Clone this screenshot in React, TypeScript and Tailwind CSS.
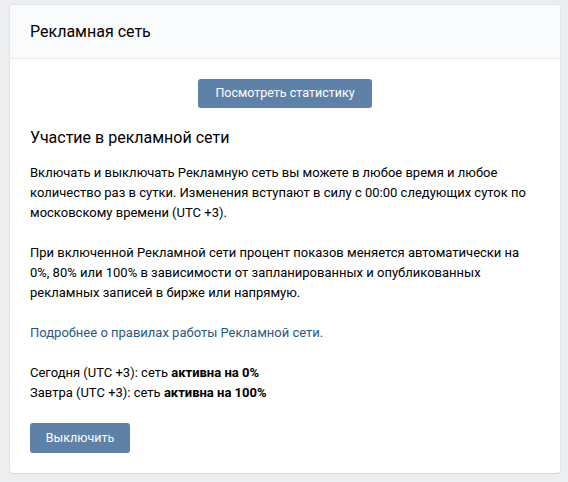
export default function App() {
  return (
    <div
      className="min-h-[482px] bg-[#edeef0] px-[10px] pt-[5px] text-black"
      style={{ fontFamily: 'Roboto, "Open Sans", "Liberation Sans", sans-serif' }}
    >
      <div className="w-[550px] rounded-[3px] bg-white shadow-[0_1px_0_0_#d7d8db,0_0_0_1px_#e3e4e8]">
        <div className="flex h-[54px] items-center rounded-t-[3px] border-b border-[#e7e8ec] bg-[#fafbfc] px-5 text-[16px] leading-5">
          Рекламная сеть
        </div>

        <div className="px-5 pb-5 pt-5">
          <div className="flex justify-center">
            <button className="h-[29px] rounded-[3px] bg-[#5e81a8] px-[17px] text-[12.5px] text-white">
              Посмотреть статистику
            </button>
          </div>

          <h2 className="mt-5 text-[16px] leading-5">Участие в рекламной сети</h2>

          <div className="mt-[15px] text-[13px] leading-5">
            <p>
              Включать и выключать Рекламную сеть вы можете в любое время и любое
              количество раз в сутки. Изменения вступают в силу с 00:00 следующих суток по
              московскому времени (UTC +3).
            </p>
            <p className="mt-5">
              При включенной Рекламной сети процент показов меняется автоматически на
              0%, 80% или 100% в зависимости от запланированных и опубликованных
              рекламных записей в бирже или напрямую.
            </p>
            <p className="mt-5">
              <a href="#" className="text-[#2a5885]">
                Подробнее о правилах работы Рекламной сети.
              </a>
            </p>
            <p className="mt-5">
              Сегодня (UTC +3): сеть <b className="font-bold">активна на 0%</b>
            </p>
            <p>
              Завтра (UTC +3): сеть <b className="font-bold">активна на 100%</b>
            </p>
          </div>

          <button className="mt-5 h-[30px] w-[100px] rounded-[3px] bg-[#5e81a8] text-[12.5px] text-white">
            Выключить
          </button>
        </div>
      </div>
    </div>
  );
}
